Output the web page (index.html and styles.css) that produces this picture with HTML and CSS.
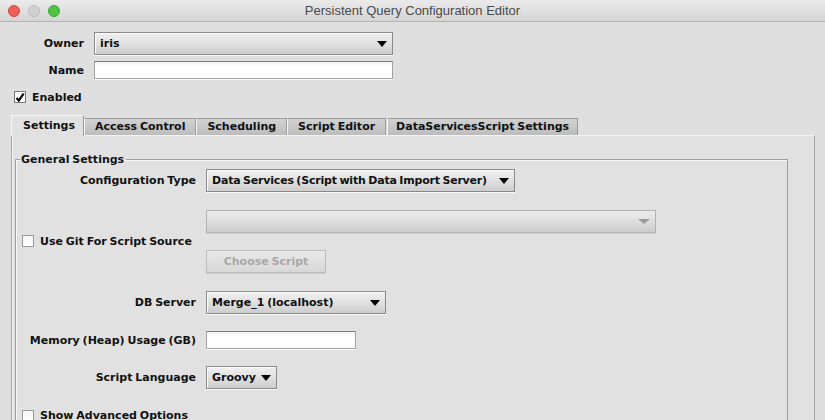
FILE: index.html
```html
<!DOCTYPE html>
<html>
<head>
<meta charset="utf-8">
<title>Persistent Query Configuration Editor</title>
<link rel="stylesheet" href="styles.css">
</head>
<body>
<div class="window">
  <div class="titlebar">
    <div class="lights">
      <span class="light red"></span>
      <span class="light gray"></span>
      <span class="light green"></span>
    </div>
    <div class="title">Persistent Query Configuration Editor</div>
    <div></div>
  </div>

  <div class="top-form">
    <span class="lbl">Owner</span>
    <div class="combo owner"><span class="combo-text">iris</span><span class="arrow"></span></div>
    <span class="lbl">Name</span>
    <div class="textfield name"></div>
  </div>

  <div class="check enabled">
    <span class="box"><svg width="10" height="10" viewBox="0 0 10 10"><path d="M1.6 6 L3.8 8.6 L8.6 1.6" fill="none" stroke="#000" stroke-width="2.2"/></svg></span>
    <span>Enabled</span>
  </div>

  <div class="tabs">
    <div class="tab active">Settings</div>
    <div class="tab">Access Control</div>
    <div class="tab">Scheduling</div>
    <div class="tab">Script Editor</div>
    <div class="tab last">DataServicesScript Settings</div>
  </div>

  <div class="panel">
    <fieldset class="group">
      <legend>General Settings</legend>
      <div class="form-grid">
        <span class="lbl">Configuration Type</span>
        <div class="combo config"><span class="combo-text">Data Services (Script with Data Import Server)</span><span class="arrow"></span></div>

        <div class="check git"><span class="box"></span><span>Use Git For Script Source</span></div>
        <div class="stack">
          <div class="combo disabled script-path"><span class="combo-text"></span><span class="arrow"></span></div>
          <div class="button disabled">Choose Script</div>
        </div>

        <span class="lbl">DB Server</span>
        <div class="combo db"><span class="combo-text">Merge_1 (localhost)</span><span class="arrow"></span></div>

        <span class="lbl">Memory (Heap) Usage (GB)</span>
        <div class="textfield memory"></div>

        <span class="lbl">Script Language</span>
        <div class="combo lang"><span class="combo-text">Groovy</span><span class="arrow"></span></div>

        <div class="check advanced"><span class="box"></span><span>Show Advanced Options</span></div>
      </div>
    </fieldset>
  </div>
</div>
</body>
</html>
```

FILE: styles.css
```css
html, body {
  margin: 0;
  padding: 0;
}

body {
  width: 825px;
  height: 420px;
  overflow: hidden;
  background: #dfdfdf;
  font-family: "DejaVu Sans", "Verdana", sans-serif;
  font-size: 11px;
  font-weight: bold;
  word-spacing: -1px;
  color: #111;
}

.window {
  width: 825px;
  height: 420px;
  overflow: hidden;
}

/* ---------- title bar ---------- */
.titlebar {
  height: 21px;
  border-bottom: 1px solid #b3b3b3;
  background: linear-gradient(#ebebeb, #d5d5d5);
  display: grid;
  grid-template-columns: 1fr auto 1fr;
  align-items: center;
}

.lights {
  display: flex;
  gap: 8px;
  padding-left: 8px;
}

.light {
  width: 12px;
  height: 12px;
  border-radius: 50%;
  box-sizing: border-box;
}

.light.red { background: #ed5f57; border: 1px solid #d8483f; }
.light.gray { background: #d0d0d0; border: 1px solid #bdbdbd; }
.light.green { background: #52c144; border: 1px solid #3ca731; }

.title {
  font-family: "Liberation Sans", Arial, sans-serif;
  font-weight: normal;
  font-size: 13px;
  word-spacing: 0;
  color: #4a4a4a;
  line-height: 21px;
}

/* ---------- generic controls ---------- */
.lbl {
  justify-self: end;
  white-space: nowrap;
}

.combo {
  box-sizing: border-box;
  height: 23px;
  display: flex;
  align-items: center;
  justify-content: space-between;
  gap: 6px;
  padding: 0 5px;
  border: 1px solid #8a8a8a;
  background: linear-gradient(#f0f0f0, #e2e2e2 45%, #cdcdcd);
  box-shadow: inset 1px 1px 0 #fbfbfb, 0 1px 0 #fafafa;
  white-space: nowrap;
}

.combo-text {
  min-width: 0;
}

.arrow {
  width: 0;
  height: 0;
  border-left: 5px solid transparent;
  border-right: 5px solid transparent;
  border-top: 6px solid #000;
  flex: none;
}

.combo.disabled {
  border-color: #b2b2b2;
  background: linear-gradient(#ececec, #e0e0e0 45%, #cbcbcb);
  box-shadow: 0 1px 0 #cfcfcf;
}

.combo.disabled .arrow {
  border-top-color: #9b9b9b;
  border-left-width: 6px;
  border-right-width: 6px;
  border-top-width: 5px;
}

.textfield {
  box-sizing: border-box;
  background: linear-gradient(#f4f4f4, #ffffff 5px);
  border: 1px solid #a2a2a2;
  border-top-color: #7e7e7e;
  box-shadow: 0 1px 0 #fbfbfb;
}

.button {
  box-sizing: border-box;
  height: 23px;
  display: flex;
  align-items: center;
  justify-content: center;
  border: 1px solid #bcbcbc;
  background: linear-gradient(#e8e8e8, #d8d8d8);
  color: #a8a8a8;
  box-shadow: 0 1px 0 #cfcfcf;
}

.check {
  display: flex;
  align-items: center;
  gap: 6px;
  white-space: nowrap;
}

.box {
  box-sizing: border-box;
  width: 12px;
  height: 12px;
  border: 1px solid #8e8e8e;
  background: linear-gradient(#f6f6f6, #ffffff);
  display: flex;
  align-items: center;
  justify-content: center;
  flex: none;
}

/* ---------- top form ---------- */
.top-form {
  display: grid;
  grid-template-columns: 84px 299px;
  column-gap: 10px;
  row-gap: 6px;
  padding-top: 10px;
  align-items: center;
}

.name {
  height: 18px;
}

.enabled {
  margin: 12px 0 0 14px;
  height: 12px;
}

.enabled .box {
  border-color: #7a7a7a;
}

/* ---------- tabs ---------- */
.tabs {
  display: flex;
  align-items: flex-end;
  margin-top: 12px;
  padding-left: 11px;
  height: 20px;
  position: relative;
  z-index: 1;
}

.tab {
  box-sizing: border-box;
  height: 17px;
  padding: 0 10px;
  line-height: 16px;
  border: 1px solid #9c9c9c;
  border-bottom: none;
  border-left-color: #f4f4f4;
  background: linear-gradient(#d2d2d2, #bcbcbc);
  white-space: nowrap;
}

.tab.last {
  margin-left: 1px;
  padding: 0 8px;
}

.tab.active {
  height: 21px;
  margin-bottom: -1px;
  padding: 0 11px;
  line-height: 19px;
  width: 73px;
  border-color: #9c9c9c;
  border-left-color: #f6f6f6;
  border-top-color: #f6f6f6;
  background: #e1e1e1;
}

/* ---------- panel ---------- */
.panel {
  margin: 0 10px 0 11px;
  height: 300px;
  border: 1px solid #a6a6a6;
  border-left-color: #ababab;
  border-top-color: #f3f3f3;
  border-bottom: none;
  box-shadow: inset 1px 0 0 #f3f3f3;
  background: #e1e1e1;
}

.group {
  margin: 17px 26px 0 3px;
  padding: 0;
  min-width: 0;
  border: 1px solid #9f9f9f;
  border-bottom: none;
  box-shadow: inset 1px 1px 0 #f7f7f7;
  height: 280px;
}

.group legend {
  margin-left: 4px;
  padding: 0 2px 0 1px;
  line-height: 13px;
}

.form-grid {
  display: grid;
  grid-template-columns: 180px auto;
  justify-content: start;
  column-gap: 10px;
  row-gap: 17px;
  align-items: center;
  padding-top: 3px;
}

.owner { width: 299px; }
.config { width: 309px; }
.config .combo-text { letter-spacing: -0.2px; }
.db { width: 180px; margin-top: 1px; }
.memory { width: 150px; height: 18px; }
.lang { width: 71px; }

.stack {
  display: flex;
  flex-direction: column;
  gap: 17px;
  margin-top: 1px;
}

.script-path { width: 450px; }
.stack .button { width: 120px; }

.git {
  margin-left: 6px;
  justify-self: start;
}

.git .box,
.advanced .box {
  border-color: #9a9a9a;
}

.advanced {
  grid-column: 1 / span 2;
  margin: 3px 0 0 6px;
}
```
